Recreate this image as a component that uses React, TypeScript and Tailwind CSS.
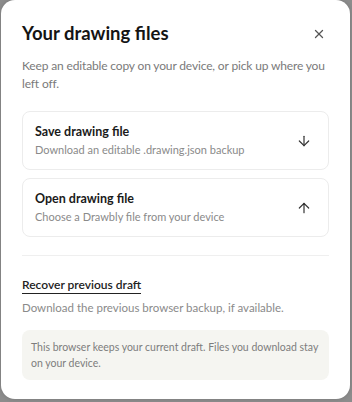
import { ArrowDown, ArrowUp, X } from 'lucide-react';

const actions = [
  { title: 'Save drawing file', desc: 'Download an editable .drawing.json backup', icon: 'down' },
  { title: 'Open drawing file', desc: 'Choose a Drawbly file from your device', icon: 'up' },
];

export default function App() {
  return (
    <div className="w-[352px] h-[402px] bg-[#8c8c8c] pl-[1px] pr-[2px] pb-[3px] font-['Lato',sans-serif]">
      <div className="h-full bg-white rounded-[14px] px-[21px] pt-[22px] shadow-[0_0_4px_rgba(0,0,0,0.15)]">
        <div className="flex items-center justify-between h-[24px]">
          <h1 className="text-[18.5px] font-bold text-[#141414]">Your drawing files</h1>
          <X className="w-[14px] h-[14px] text-[#555] mr-[3px]" strokeWidth={2.2} />
        </div>
        <p className="mt-[11px] text-[12px] leading-[18px] tracking-[-0.15px] text-[#7a7a7a]">
          Keep an editable copy on your device, or pick up where you left off.
        </p>

        <div className="mt-[18px] flex flex-col gap-[8px]">
          {actions.map((a) => (
            <div key={a.title} className="h-[59px] border border-[#ececec] rounded-[8px] pl-[12px] pr-[16px] flex items-center justify-between">
              <div>
                <div className="text-[12.5px] font-bold text-[#1a1a1a] leading-[16px]">{a.title}</div>
                <div className="mt-[2px] text-[11px] text-[#8a8a8a] leading-[16px]">{a.desc}</div>
              </div>
              {a.icon === 'down'
                ? <ArrowDown className="w-[16px] h-[16px] text-[#333]" strokeWidth={1.8} />
                : <ArrowUp className="w-[16px] h-[16px] text-[#333]" strokeWidth={1.8} />}
            </div>
          ))}
        </div>

        <div className="mt-[18px] border-t border-[#efefef]" />

        <div className="mt-[19px] leading-[16px]">
          <span className="text-[12px] font-semibold text-[#222] border-b border-[#222] pb-[1px]">Recover previous draft</span>
        </div>
        <p className="mt-[7px] text-[11.5px] leading-[16px] text-[#8a8a8a]">Download the previous browser backup, if available.</p>

        <div className="mt-[14px] bg-[#f5f5f1] rounded-[8px] px-[9px] py-[9px] text-[10.5px] leading-[16px] text-[#7d7d7d]">
          This browser keeps your current draft. Files you download stay on your device.
        </div>
      </div>
    </div>
  );
}
